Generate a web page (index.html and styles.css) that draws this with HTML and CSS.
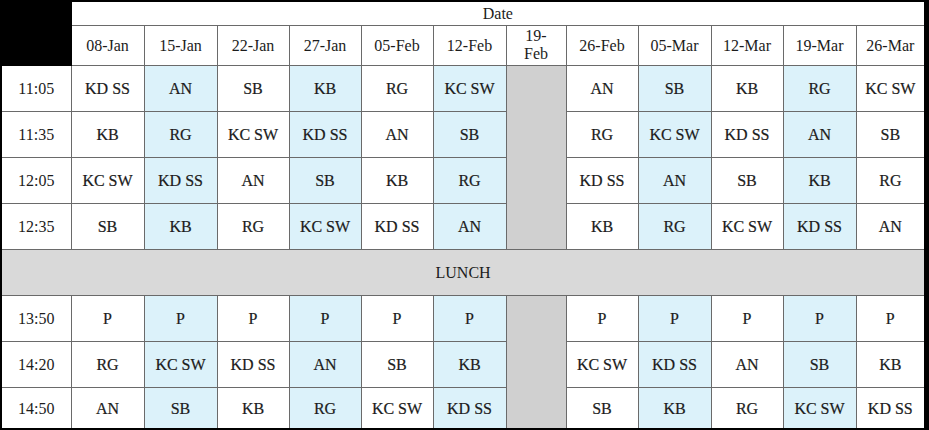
FILE: index.html
```html
<!DOCTYPE html>
<html lang="en">
<head>
<meta charset="utf-8">
<title>Rota</title>
<link rel="stylesheet" href="styles.css">
</head>
<body>
<table class="rota">
  <colgroup>
    <col class="c-time">
    <col class="c-date">
    <col class="c-date alt">
    <col class="c-date2">
    <col class="c-date2 alt">
    <col class="c-date2">
    <col class="c-date alt">
    <col class="c-gap">
    <col class="c-date2">
    <col class="c-date alt">
    <col class="c-date2">
    <col class="c-date alt">
    <col class="c-last">
  </colgroup>
  <thead>
    <tr class="r-top">
      <th class="corner" rowspan="2"></th>
      <th class="hd" colspan="12">Date</th>
    </tr>
    <tr class="r-dates">
      <th class="hd">08-Jan</th>
      <th class="hd">15-Jan</th>
      <th class="hd">22-Jan</th>
      <th class="hd">27-Jan</th>
      <th class="hd">05-Feb</th>
      <th class="hd">12-Feb</th>
      <th class="hd wrap">19-<br>Feb</th>
      <th class="hd">26-Feb</th>
      <th class="hd">05-Mar</th>
      <th class="hd">12-Mar</th>
      <th class="hd">19-Mar</th>
      <th class="hd">26-Mar</th>
    </tr>
  </thead>
  <tbody>
    <tr class="r-slot">
      <th class="time">11:05</th>
      <td>KD SS</td><td>AN</td><td>SB</td><td>KB</td><td>RG</td><td>KC SW</td>
      <td class="gap" rowspan="4"></td>
      <td>AN</td><td>SB</td><td>KB</td><td>RG</td><td>KC SW</td>
    </tr>
    <tr class="r-slot">
      <th class="time">11:35</th>
      <td>KB</td><td>RG</td><td>KC SW</td><td>KD SS</td><td>AN</td><td>SB</td>
      <td>RG</td><td>KC SW</td><td>KD SS</td><td>AN</td><td>SB</td>
    </tr>
    <tr class="r-slot">
      <th class="time">12:05</th>
      <td>KC SW</td><td>KD SS</td><td>AN</td><td>SB</td><td>KB</td><td>RG</td>
      <td>KD SS</td><td>AN</td><td>SB</td><td>KB</td><td>RG</td>
    </tr>
    <tr class="r-slot">
      <th class="time">12:35</th>
      <td>SB</td><td>KB</td><td>RG</td><td>KC SW</td><td>KD SS</td><td>AN</td>
      <td>KB</td><td>RG</td><td>KC SW</td><td>KD SS</td><td>AN</td>
    </tr>
    <tr class="r-slot">
      <td class="lunch" colspan="13">LUNCH</td>
    </tr>
    <tr class="r-slot">
      <th class="time">13:50</th>
      <td>P</td><td>P</td><td>P</td><td>P</td><td>P</td><td>P</td>
      <td class="gap" rowspan="3"></td>
      <td>P</td><td>P</td><td>P</td><td>P</td><td>P</td>
    </tr>
    <tr class="r-slot">
      <th class="time">14:20</th>
      <td>RG</td><td>KC SW</td><td>KD SS</td><td>AN</td><td>SB</td><td>KB</td>
      <td>KC SW</td><td>KD SS</td><td>AN</td><td>SB</td><td>KB</td>
    </tr>
    <tr class="r-end">
      <th class="time">14:50</th>
      <td>AN</td><td>SB</td><td>KB</td><td>RG</td><td>KC SW</td><td>KD SS</td>
      <td>SB</td><td>KB</td><td>RG</td><td>KC SW</td><td>KD SS</td>
    </tr>
  </tbody>
</table>
</body>
</html>
```

FILE: styles.css
```css
html, body {
  margin: 0;
  padding: 0;
  background: #000;
}

body {
  padding: 2px 0 0 2px;
  width: 929px;
  height: 430px;
  box-sizing: border-box;
  overflow: hidden;
}

.rota {
  border-collapse: collapse;
  border-style: hidden;
  table-layout: fixed;
  width: 922px;
  background: #fff;
  font-family: "Liberation Serif", "DejaVu Serif", serif;
  font-size: 16px;
  color: #1c1c1c;
}

.c-time { width: 69px; }
.c-date { width: 73px; }
.c-date2 { width: 72px; }
.c-gap { width: 60px; }
.c-last { width: 68px; }

.alt { background: #dcf2fa; }

.rota th,
.rota td {
  border: 1px solid #6a6a6a;
  padding: 0;
  text-align: center;
  vertical-align: middle;
  font-weight: normal;
  white-space: nowrap;
  font-family: "Liberation Serif", "DejaVu Serif", serif;
  font-size: 16px;
}

.rota td {
  -webkit-text-stroke: 0.2px #1c1c1c;
  padding-top: 2px;
}

.r-top { height: 23px; }
.r-dates { height: 40px; }
.r-slot { height: 46px; }
.r-end { height: 41px; }

.rota .corner {
  background: #000;
  border-color: #000;
}

.rota .hd {
  background: #fff;
  padding-top: 1px;
}

.rota .wrap {
  line-height: 18px;
  padding-bottom: 2px;
}

.rota .time {
  background: #fff;
  padding-top: 2px;
}

.rota .gap {
  background: #d0d0d0;
}

.rota .lunch {
  background: #d9d9d9;
  -webkit-text-stroke: 0;
}
```
